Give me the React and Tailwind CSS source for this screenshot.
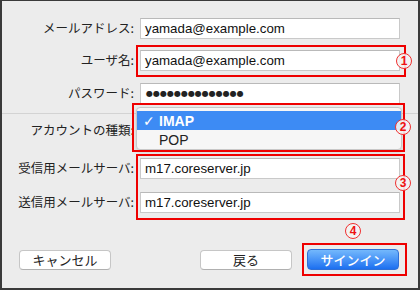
import React from "react";

const jp = { fontFamily: '"Noto Sans CJK JP", "Noto Sans", sans-serif' };
const lat = { fontFamily: '"Liberation Sans", Arial, sans-serif' };

function Label({ children }) {
  return (
    <div className="flex items-center justify-end text-[12.5px] text-[#222] leading-none whitespace-nowrap" style={jp}>
      {children}
    </div>
  );
}

function Field({ children }) {
  return (
    <div className="flex items-center bg-white border border-[#c9c9c9] border-t-[#b9b9b9] px-[4px] text-[13.3px] text-[#111] leading-none" style={lat}>
      {children}
    </div>
  );
}

function Row({ label, value, className = "" }) {
  return (
    <div className={"grid grid-cols-[132px_260px] gap-x-[6px] h-[21px] " + className}>
      <Label>{label}</Label>
      <Field>{value}</Field>
    </div>
  );
}

function Circle({ n, className }) {
  return (
    <div
      className={"absolute w-[16px] h-[16px] rounded-full border border-[#f03030] bg-[#f4f4f4]/90 flex items-center justify-center text-[12px] font-bold text-[#ee1111] leading-none " + className}
      style={lat}
    >
      {n}
    </div>
  );
}

function Btn({ children, className = "" }) {
  return (
    <div
      className={"h-[20px] w-[92px] rounded-[4px] bg-white border border-[#c6c6c6] border-b-[#b0b0b0] flex items-center justify-center text-[13px] text-[#222] leading-none " + className}
      style={jp}
    >
      {children}
    </div>
  );
}

export default function App() {
  return (
    <div className="relative w-[420px] h-[290px] bg-[#ececec] border-l-2 border-r-2 border-b-2 border-t border-[#3a3a3a] overflow-hidden">
      <div className="flex flex-col pt-[17px]">
        <Row label="メールアドレス:" value="yamada@example.com" />
        <Row label="ユーザ名:" value="yamada@example.com" className="mt-[11px]" />
        <Row
          label="パスワード:"
          className="mt-[12px]"
          value={
            <span className="text-[8px] tracking-[0px] text-[#222] pl-[1px]" style={{ fontFamily: '"DejaVu Sans", sans-serif' }}>
              ●●●●●●●●●●●●●●
            </span>
          }
        />
        <div className="mt-[9px] border-t border-[#d3d3d3]" />
        <div className="grid grid-cols-[132px_260px] gap-x-[6px] h-[20px] mt-[6px]">
          <Label>アカウントの種類:</Label>
          <div />
        </div>
        <Row label="受信用メールサーバ:" value="m17.coreserver.jp" className="mt-[18px]" />
        <Row label="送信用メールサーバ:" value="m17.coreserver.jp" className="mt-[13px]" />
        <div className="flex items-center mt-[36px] pl-[17px]">
          <Btn>キャンセル</Btn>
          <Btn className="ml-[89px]">戻る</Btn>
          <div
            className="ml-[15px] h-[21px] w-[92px] rounded-[4px] border border-[#2f6fd6] bg-gradient-to-b from-[#74b8fc] to-[#1b6ff0] flex items-center justify-center text-[13px] font-medium text-white leading-none"
            style={jp}
          >
            サインイン
          </div>
        </div>
      </div>

      {/* dropdown popup */}
      <div className="absolute left-[134px] top-[106px] w-[266px] h-[43px] bg-[#f6f6f6] border border-[#c8c8c8] rounded-[4px] shadow-[0_2px_4px_rgba(0,0,0,0.15)] flex flex-col pt-[3px]" style={lat}>
        <div className="h-[19px] bg-[#3d8bf4] flex items-center text-white text-[14px] font-bold leading-none">
          <span className="w-[22px] pl-[6px] text-[14px]" style={{ fontFamily: '"DejaVu Sans", sans-serif' }}>✓</span>
          <span>IMAP</span>
        </div>
        <div className="h-[19px] flex items-center text-[14px] text-[#222] leading-none pl-[22px]">POP</div>
      </div>

      {/* red highlight boxes */}
      <div className="absolute left-[134px] top-[44px] w-[270px] h-[32px] border-2 border-[#ee0000]" />
      <div className="absolute left-[130px] top-[102px] w-[273px] h-[49px] border-2 border-[#ee0000]" />
      <div className="absolute left-[134px] top-[153px] w-[269px] h-[66px] border-2 border-[#ee0000]" />
      <div className="absolute left-[300px] top-[242px] w-[105px] h-[33px] border-2 border-[#ee0000]" />

      <Circle n="1" className="left-[394px] top-[52px]" />
      <Circle n="2" className="left-[393px] top-[118px]" />
      <Circle n="3" className="left-[393px] top-[174px]" />
      <Circle n="4" className="left-[343px] top-[222px]" />
    </div>
  );
}
